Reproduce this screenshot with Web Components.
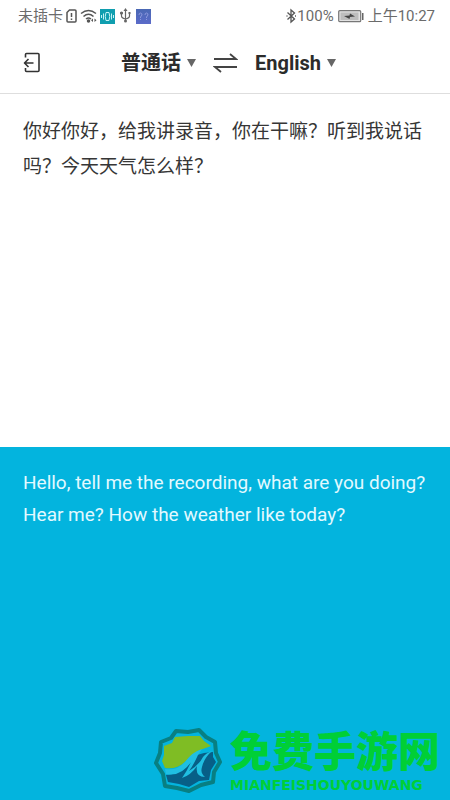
<!DOCTYPE html>
<html lang="zh-CN">
<head>
<meta charset="utf-8">
<meta name="viewport" content="width=device-width, initial-scale=1">
<title>翻译</title>
<style>
  body { margin: 0; background: #fff; font-family: Roboto, "Noto Sans CJK SC", sans-serif; color: #333; }
</style>
</head>
<body>
<translator-app></translator-app>
<script>
const define = (name, html, setup) => customElements.define(name, class extends HTMLElement {
  constructor() {
    super();
    const template = document.createElement('template');
    template.innerHTML = html;
    this.attachShadow({ mode: 'open' }).append(template.content.cloneNode(true));
    if (setup) setup.call(this, this.shadowRoot);
  }
});

define('status-bar', `
<style>
  :host { display: flex; justify-content: space-between; align-items: center; height: 32px; padding: 0 15px 0 18px; font-size: 15px; line-height: 20px; color: #6b6b6b; }
  div { display: flex; align-items: center; white-space: nowrap; }
  .left { gap: 2px; }
  .right { gap: 4px; }
  .bt { display: flex; align-items: center; }
  svg { display: block; flex: none; }
  .usb { margin: 0 2px; }
</style>
<div class="left">
  <span>未插卡</span>
  <svg width="13" height="16" viewBox="0 0 13 16" fill="none" stroke="#555" stroke-width="1.5"><path d="M2 4.500 4.500 2H10a1 1 0 0 1 1 1v10a1 1 0 0 1-1 1H3a1 1 0 0 1-1-1z"/><path d="M6.500 5v4M6.500 10.500V12"/></svg>
  <svg width="18" height="16" viewBox="0 0 18 16" fill="none" stroke="#555" stroke-width="1.5"><path d="M1 5.500Q8.500 -.5 16 5.500M3.500 8.500Q8.500 4 13.500 8.500M6 11Q8.500 9 11 11"/><circle cx="8.500" cy="13" r="1" fill="#555"/><path d="m13 10.500-2 1.800 2 1.700zm1.500 0 2 1.800-2 1.700z" fill="#555" stroke="none"/></svg>
  <svg width="15" height="15" viewBox="0 0 15 15"><path fill="#109eaf" d="M0 0h15v15H0z"/><path d="M1.500 6v3M3.500 4.500v6M11.500 4.500v6M13.500 6v3M6 3.500Q4.500 7.500 6 11.500M9 3.500q1.500 4 0 8M6 3.500h3M6 11.500h3" fill="none" stroke="#c5f3f5"/></svg>
  <svg class="usb" width="13" height="16" viewBox="0 0 13 16" fill="none" stroke="#666" stroke-width="1.200"><path d="M6.500 2v11M2.500 5v3q0 2 4 3 4-1 4-3V5"/><path d="m6.500 0 2 3h-4z" fill="#666" stroke="none"/><circle cx="6.500" cy="13" r="1.500" fill="#666" stroke="none"/><circle cx="2.500" cy="5" r="1" fill="#666"/><path d="M9.500 4h2v2h-2z" fill="#666" stroke="none"/></svg>
  <svg width="15" height="15" viewBox="0 0 15 15"><defs><linearGradient id="g" x2="0" y2="1"><stop stop-color="#4a68b4"/><stop offset="1" stop-color="#5b6bc9"/></linearGradient></defs><path fill="url(#g)" d="M0 0h15v15H0z"/><path d="M3 6q0-2 1.500-2T6 6L4.500 8v1m0 1v1M9 6q0-2 1.500-2T12 6l-1.500 2v1m0 1v1" fill="none" stroke="#8b98dc"/></svg>
</div>
<div class="right">
  <span class="bt"><svg width="11" height="16" viewBox="0 0 11 16" fill="none" stroke="#555" stroke-width="1.300"><path d="m1.500 4.500 7 6.500-3.500 3V2l3.500 3-7 6.500M.5 8h1m7.500 0h1"/></svg>100%</span>
  <svg width="26" height="13" viewBox="0 0 26 13"><rect x=".7" y=".7" width="22" height="11" rx="1" fill="#e2e2e2" stroke="#777" stroke-width="1.200"/><path fill="#bdbdbd" d="M2.500 2.500h18v7.500h-18z"/><path fill="#444" d="m6 6 5.500-.5.500-2L17 6.500l-5 .5-.5 2z"/><path fill="#666" d="M24 3h1.500v7H24z"/></svg>
  <span>上午10:27</span>
</div>`);

define('language-picker', `
<style>
  :host { display: block; }
  label { display: flex; align-items: center; gap: 6px; }
  select { appearance: none; field-sizing: content; border: 0; margin: 0; padding: 0; background: none; color: #2b2b2b; font: bold 20px/28px Roboto, "Noto Sans CJK SC", sans-serif; cursor: pointer; }
  svg { display: block; flex: none; }
</style>
<label><select><option></option></select><svg width="9" height="8" viewBox="0 0 9 8"><path fill="#666" d="M0 0h9L4.500 8z"/></svg></label>`,
function (root) {
  const select = root.querySelector('select');
  select.options[0].text = this.getAttribute('value');
  select.setAttribute('aria-label', this.getAttribute('label'));
});

define('translator-header', `
<style>
  :host { display: grid; grid-template-columns: 1fr auto 1fr; align-items: center; height: 61px; padding: 0 16px 0 23px; border-bottom: 1px solid #dedede; }
  nav { display: flex; align-items: center; gap: 17px; }
  button { border: 0; padding: 0; background: none; cursor: pointer; }
  svg { display: block; }
  .exit { justify-self: start; }
</style>
<button class="exit" type="button" aria-label="退出"><svg width="18" height="22" viewBox="0 0 18 22" fill="none" stroke="#333" stroke-width="1.600" stroke-linejoin="round"><path d="M2.500 5.500V2.500q0-1 1-1H15q1 0 1 1v16q0 1-1 1H3.500q-1 0-1-1V16"/><path d="M10.500 11H1.500M5.500 7l-4 4 4 4"/></svg></button>
<nav>
  <language-picker value="普通话" label="源语言"></language-picker>
  <button type="button" aria-label="交换语言"><svg width="25" height="20" viewBox="0 0 25 20" fill="none" stroke="#444" stroke-width="1.800"><path d="M1 6h22L17 1M24 14H2l6 5"/></svg></button>
  <language-picker value="English" label="目标语言"></language-picker>
</nav>`);

define('text-panel', `
<style>
  :host { display: flex; flex-direction: column; box-sizing: border-box; padding: 20px 23px 0; font-size: 19px; line-height: 35px; color: #363636; }
  :host([tone="result"]) { background: #03b4de; color: #e2f9ff; padding-right: 10px; line-height: 32px; }
  p { margin: 0; flex: 1; }
</style>
<p><slot></slot></p><slot name="footer"></slot>`);

define('site-mark', `
<style>
  :host { display: flex; justify-content: flex-end; align-items: flex-start; gap: 8px; height: 76px; color: #00cf36; }
  svg { display: block; flex: none; margin-top: 3px; }
  .name { font: 900 42px/50px "Noto Sans CJK SC", sans-serif; }
  .latin { font: bold 14px/16px "DejaVu Sans", sans-serif; }
  .words { display: flex; flex-direction: column; gap: 3px; }
</style>
<svg width="68" height="68" viewBox="0 0 68 68">
  <path d="M22 4 34 5 45 3 52 10 61 15 62 26 66 35 60 45 59 55 47 58 35 64 23 61 11 59 9 47 2 36 6 26 7 15 17 11z" fill="#03b4de" stroke="#087f82" stroke-width="4" stroke-linejoin="round"/>
  <path d="M21 10 34 9 46 9 50 14 57 19 46 23 Q38 27 32 34 23 43 11 41L8 34 10 28 10 19 18 16z" fill="#7fbd24"/>
  <path d="M59 25 59 30 62 35 57 43 55 53 45 54 35 60 25 57 14 55 12 48Q24 47 32 40 38 35 43 28L50 26z" fill="#075f87"/>
  <path d="M11 42Q23 44 31 35 38 25 48 22L44 28Q39 39 35 44 45 38 49 30 52 26 58 24 50 31 48 40 46 46 51 50 41 50 43 39 37 48 28 51 33 44 37 35 27 50 12 47z" fill="#20bfe2"/>
</svg>
<div class="words"><span class="name">免费手游网</span><span class="latin">MIANFEISHOUYOUWANG</span></div>`);

define('translator-app', `
<style>
  :host { display: grid; grid-template-rows: auto auto 1fr 1fr; min-height: 100vh; }
</style>
<status-bar></status-bar>
<translator-header></translator-header>
<text-panel>你好你好，给我讲录音，你在干嘛？听到我说话吗？今天天气怎么样？</text-panel>
<text-panel tone="result">Hello, tell me the recording, what are you doing? Hear me? How the weather like today?<site-mark slot="footer"></site-mark></text-panel>`);
</script>
</body>
</html>
